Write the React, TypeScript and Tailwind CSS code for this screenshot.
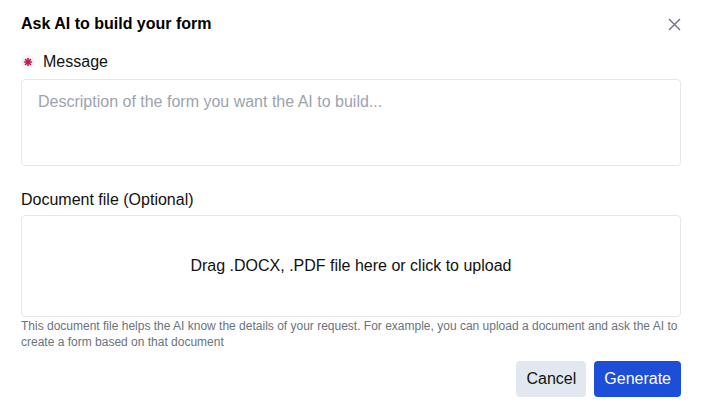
import React from 'react'

function Asterisk() {
  return (
    <svg width="14" height="14" viewBox="0 0 14 14" className="shrink-0">
      <circle cx="7" cy="7" r="7" fill="#f3f4f8" />
      <g stroke="#c0134a" strokeWidth="1.6" strokeLinecap="round">
        <line x1="7" y1="3.5" x2="7" y2="10.5" />
        <line x1="3.5" y1="7" x2="10.5" y2="7" />
        <line x1="4.5" y1="4.5" x2="9.5" y2="9.5" />
        <line x1="9.5" y1="4.5" x2="4.5" y2="9.5" />
      </g>
    </svg>
  )
}

export default function App() {
  return (
    <div
      className="w-[702px] h-[418px] bg-white text-[#111827] px-[21px] pt-[14px]"
      style={{ fontFamily: '"Liberation Sans", Arial, sans-serif' }}
    >
      <div className="flex items-center justify-between h-[20px]">
        <h1 className="text-[16px] font-bold text-black leading-none">Ask AI to build your form</h1>
        <button className="text-[#6b7280]">
          <svg width="13" height="13" viewBox="0 0 13 13">
            <path d="M1 1 L12 12 M12 1 L1 12" stroke="currentColor" strokeWidth="1.4" />
          </svg>
        </button>
      </div>

      <div className="mt-[18px] flex items-center gap-[8px] h-[20px]">
        <Asterisk />
        <span className="text-[16px] leading-none text-[#111]">Message</span>
      </div>
      <textarea
        className="mt-[7px] block w-full h-[87px] resize-none rounded-[4px] border border-[#e5e7eb] px-[16px] py-[10px] text-[16px] placeholder:text-[#9ca3af] outline-none"
        placeholder="Description of the form you want the AI to build..."
      />

      <div className="mt-[24px] h-[20px] text-[16px] leading-[20px] text-[#111]">Document file (Optional)</div>
      <div className="mt-[5px] h-[102px] rounded-[4px] border border-[#e5e7eb] flex items-center justify-center text-[16px] text-[#111]">
        Drag .DOCX, .PDF file here or click to upload
      </div>
      <p className="mt-[1px] text-[12px] leading-[16px] text-[#6b7280]">
        This document file helps the AI know the details of your request. For example, you can upload a document and ask the AI to create a form based on that document
      </p>

      <div className="mt-[11px] flex justify-end gap-[8px]">
        <button className="h-[36px] px-[10px] rounded-[4px] bg-[#e2e8f0] text-[16px] text-[#111]">Cancel</button>
        <button className="h-[36px] px-[10px] rounded-[4px] bg-[#1d4ed8] text-[16px] text-white">Generate</button>
      </div>
    </div>
  )
}
